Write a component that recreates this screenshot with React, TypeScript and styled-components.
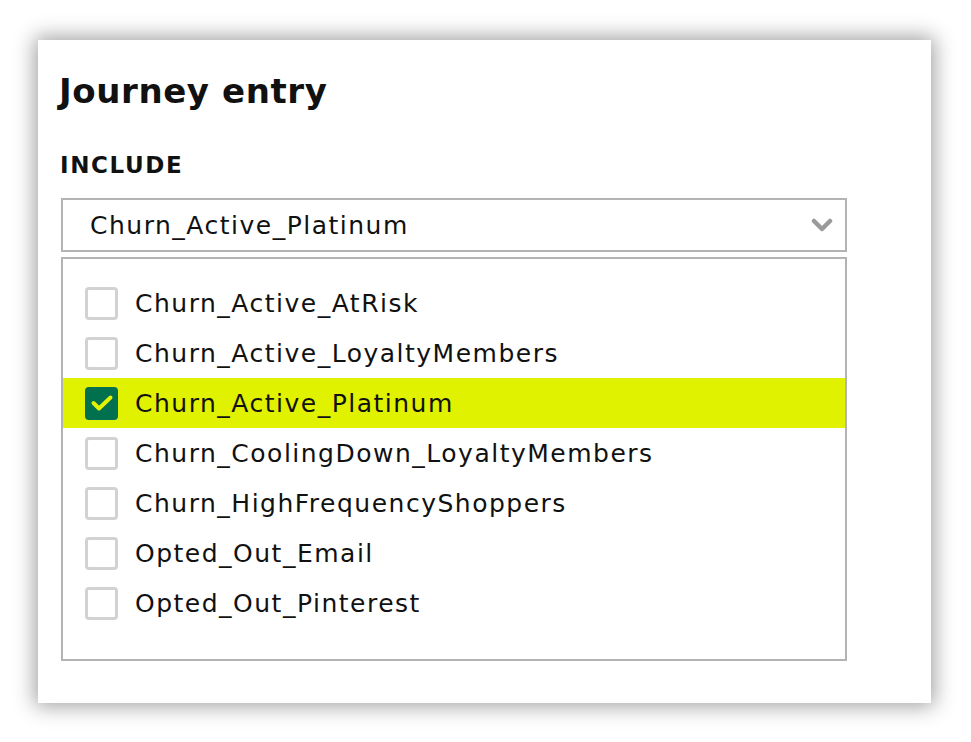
import React from 'react'
import styled, { createGlobalStyle } from 'styled-components'

const GlobalStyle = createGlobalStyle`
  html, body {
    margin: 0;
    padding: 0;
    background: #ffffff;
  }
  body {
    font-family: "DejaVu Sans", "Liberation Sans", sans-serif;
    color: #111111;
  }
`

const segments = [
  'Churn_Active_AtRisk',
  'Churn_Active_LoyaltyMembers',
  'Churn_Active_Platinum',
  'Churn_CoolingDown_LoyaltyMembers',
  'Churn_HighFrequencyShoppers',
  'Opted_Out_Email',
  'Opted_Out_Pinterest',
]

const selected = 'Churn_Active_Platinum'

const App: React.FC = () => {
  return (
    <>
      <GlobalStyle />
      <Page>
        <Card>
          <Title>Journey entry</Title>
          <SectionLabel>INCLUDE</SectionLabel>
          <Select>
            <SelectValue>{selected}</SelectValue>
            <svg width="22" height="14" viewBox="0 0 22 14">
              <polyline
                points="3,3 11,11 19,3"
                fill="none"
                stroke="#9a9a9a"
                strokeWidth="4.5"
                strokeLinecap="round"
                strokeLinejoin="round"
              />
            </svg>
          </Select>
          <OptionList>
            {segments.map((name) => {
              const checked = name === selected
              return (
                <Option key={name} $active={checked}>
                  <Checkbox $checked={checked}>
                    {checked && (
                      <svg width="24" height="20" viewBox="0 0 24 20">
                        <polyline
                          points="3.5,10 9,15.5 20.5,4.5"
                          fill="none"
                          stroke="#e2f200"
                          strokeWidth="4"
                          strokeLinecap="round"
                          strokeLinejoin="round"
                        />
                      </svg>
                    )}
                  </Checkbox>
                  <OptionText>{name}</OptionText>
                </Option>
              )
            })}
          </OptionList>
        </Card>
      </Page>
    </>
  )
}

export default App

const Page = styled.div`
  padding: 40px 0 0 38px;
  height: 742px;
  box-sizing: border-box;
`

const Card = styled.div`
  width: 893px;
  height: 663px;
  box-sizing: border-box;
  background: #ffffff;
  box-shadow: 0 0 20px 3px rgba(0, 0, 0, 0.38);
  padding: 30px 0 0 21px;
`

const Title = styled.h1`
  margin: 0;
  font-size: 34px;
  font-weight: 700;
  line-height: 42px;
  letter-spacing: 0.6px;
`

const SectionLabel = styled.div`
  margin-top: 40px;
  margin-left: 1px;
  font-size: 23px;
  font-weight: 700;
  line-height: 26px;
  letter-spacing: 1.6px;
`

const Select = styled.div`
  margin-top: 20px;
  margin-left: 2px;
  width: 786px;
  height: 54px;
  box-sizing: border-box;
  border: 2px solid #b3b3b3;
  display: flex;
  align-items: center;
  justify-content: space-between;
  padding: 0 12px 0 27px;
`

const SelectValue = styled.span`
  font-size: 25px;
  font-weight: 400;
  letter-spacing: 1.5px;
`

const OptionList = styled.div`
  margin-top: 5px;
  margin-left: 2px;
  width: 786px;
  height: 404px;
  box-sizing: border-box;
  border: 2px solid #b3b3b3;
  padding-top: 19px;
`

const Option = styled.div<{ $active: boolean }>`
  height: 50px;
  display: flex;
  align-items: center;
  gap: 17px;
  padding-left: 22px;
  background: ${(p) => (p.$active ? '#e0f200' : 'transparent')};
`

const Checkbox = styled.span<{ $checked: boolean }>`
  width: 33px;
  height: 33px;
  box-sizing: border-box;
  border-radius: 4px;
  border: ${(p) => (p.$checked ? 'none' : '3px solid #d2d2d2')};
  background: ${(p) => (p.$checked ? '#00704f' : '#ffffff')};
  display: flex;
  align-items: center;
  justify-content: center;
  flex-shrink: 0;
`

const OptionText = styled.span`
  font-size: 25px;
  font-weight: 400;
  letter-spacing: 1.5px;
`
